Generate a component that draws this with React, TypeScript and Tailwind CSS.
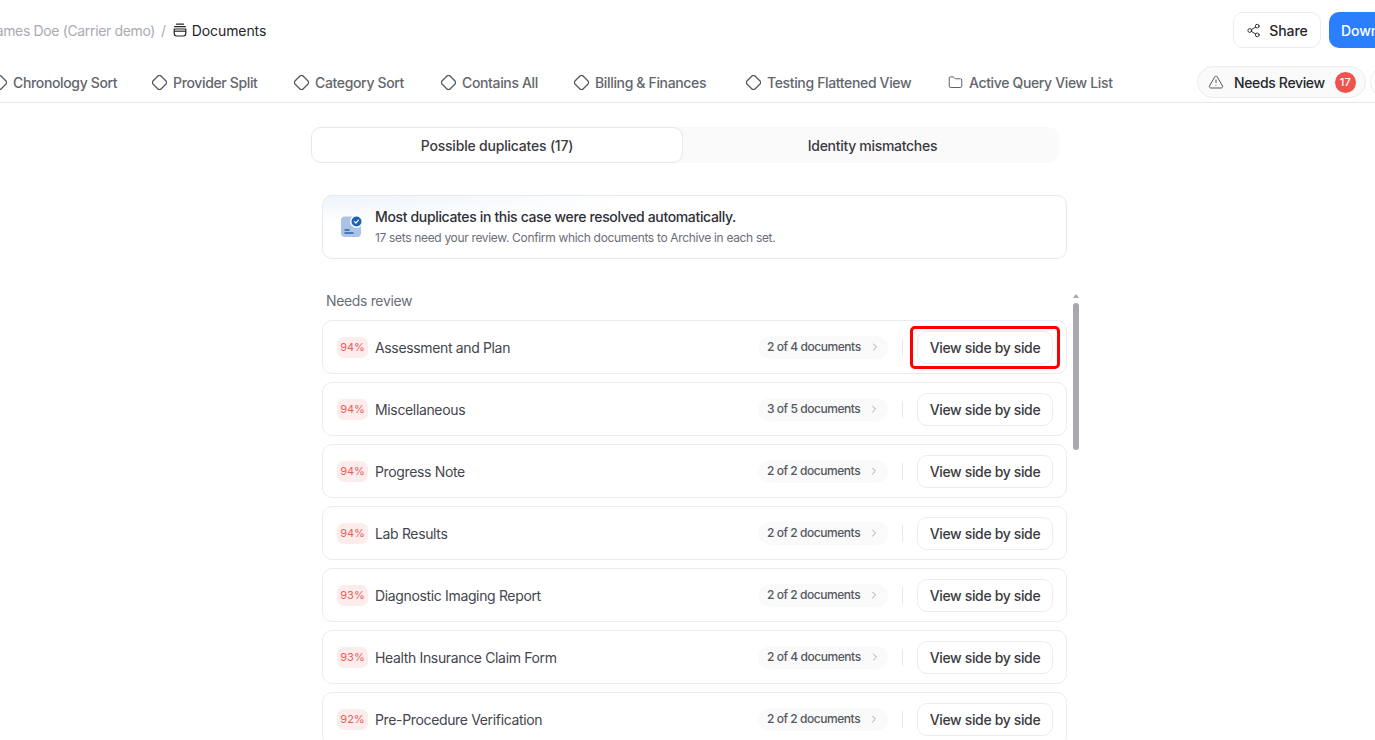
import React from 'react';
import { AlertTriangle, ChevronRight, Folder, Share2 } from 'lucide-react';

const views = [
  { label: 'Chronology Sort', w: 'w-[160px]' },
  { label: 'Provider Split', w: 'w-[142px]' },
  { label: 'Category Sort', w: 'w-[147px]' },
  { label: 'Contains All', w: 'w-[133px]' },
  { label: 'Billing & Finances', w: 'w-[172px]' },
  { label: 'Testing Flattened View', w: 'w-[202px]' },
];

const rows = [
  { pct: '94%', title: 'Assessment and Plan', docs: '2 of 4 documents' },
  { pct: '94%', title: 'Miscellaneous', docs: '3 of 5 documents' },
  { pct: '94%', title: 'Progress Note', docs: '2 of 2 documents' },
  { pct: '94%', title: 'Lab Results', docs: '2 of 2 documents' },
  { pct: '93%', title: 'Diagnostic Imaging Report', docs: '2 of 2 documents' },
  { pct: '93%', title: 'Health Insurance Claim Form', docs: '2 of 4 documents' },
  { pct: '92%', title: 'Pre-Procedure Verification', docs: '2 of 2 documents' },
];

const Diamond = () => (
  <svg width="15" height="15" viewBox="0 0 15 15" fill="none" stroke="#55585f" strokeWidth="1.3" className="shrink-0">
    <rect x="1.8" y="1.8" width="11.4" height="11.4" rx="2.5" transform="rotate(45 7.5 7.5)" />
  </svg>
);

const DocStack = () => (
  <svg width="14" height="14" viewBox="0 0 14 14" fill="none" stroke="#26272b" strokeWidth="1.2" className="shrink-0">
    <path d="M3.5 1.2h7" strokeLinecap="round" />
    <path d="M1.6 3.6h10.8" strokeLinecap="round" />
    <path d="M1.2 6h11.6v4.6a2.4 2.4 0 0 1-2.4 2.4H3.6a2.4 2.4 0 0 1-2.4-2.4z" />
    <path d="M1.2 8.2h11.6" />
  </svg>
);

const ResolvedIcon = () => (
  <svg width="24" height="24" viewBox="0 0 24 24" fill="none" className="shrink-0">
    <rect x="1" y="1.5" width="20" height="20.5" rx="4" fill="#a9c4e6" />
    <path d="M5 15h4M5 18h8" stroke="#2c63a8" strokeWidth="1.5" strokeLinecap="round" />
    <circle cx="16.5" cy="6.5" r="6.5" fill="#fff" />
    <circle cx="16.5" cy="6.5" r="5" fill="#1f62b5" />
    <path d="M14.4 6.6l1.5 1.4 2.6-2.8" stroke="#fff" strokeWidth="1.2" strokeLinecap="round" strokeLinejoin="round" />
  </svg>
);

const App: React.FC = () => {
  return (
    <div className="relative h-screen overflow-hidden bg-white font-['Inter',sans-serif]">
      <div className="flex h-[60px] items-center justify-between">
        <div className="flex items-center -ml-[12px] text-[14px] tracking-[-0.35px]">
          <span className="text-[#a9abb2]">James Doe (Carrier demo)</span>
          <span className="ml-[6px] mr-[7px] text-[#a9abb2]">/</span>
          <DocStack />
          <span className="ml-[5px] tracking-[-0.1px] text-[#26272b]">Documents</span>
        </div>
        <div className="flex items-center gap-2 -mr-[46px]">
          <button className="flex h-9 w-[88px] items-center justify-center gap-2 rounded-[10px] border border-[#ececee] bg-white text-[14px] font-medium tracking-[-0.1px] text-[#26272b]">
            <Share2 size={15} strokeWidth={1.5} />
            Share
          </button>
          <button className="h-9 w-[92px] rounded-[10px] bg-[#2b7fff] pl-3 text-left text-[14px] font-medium tracking-[-0.1px] text-white">Download</button>
        </div>
      </div>

      {/* View tabs */}
      <div className="flex h-[43px] items-center overflow-hidden border-b border-[#e8e8ea] pt-[2px]">
        <div className="flex items-center -ml-[8px] text-[14px] font-medium tracking-[-0.35px]">
          {views.map((v) => (
            <div key={v.label} className={`flex items-center gap-[6px] text-[#63666d] ${v.w} shrink-0`}>
              <Diamond />
              <span className="whitespace-nowrap">{v.label}</span>
            </div>
          ))}
          <div className="flex w-[249px] shrink-0 items-center gap-[6px] text-[#63666d]">
            <Folder size={15} strokeWidth={1.5} color="#55585f" />
            <span className="whitespace-nowrap">Active Query View List</span>
          </div>
          <div className="flex h-8 w-[169px] shrink-0 items-center rounded-full border border-[#ececee] bg-[#fafafa] pl-[10px]">
            <AlertTriangle size={16} strokeWidth={1.5} color="#55585f" />
            <span className="ml-[10px] text-[#26272b]">Needs Review</span>
            <span className="ml-[10px] flex h-[21px] w-[21px] items-center justify-center rounded-full bg-[#ef5350] text-[11px] font-medium tracking-normal text-white">17</span>
          </div>
          <div className="ml-[4px] h-8 w-8 shrink-0 rounded-full border border-[#ececee] bg-white" />
        </div>
      </div>

      {/* Tabs */}
      <div className="ml-[311px] mt-6 flex h-9 w-[748px] rounded-[10px] bg-[#fafafa] text-[14px] font-medium text-[#3a3b40]">
        <div className="flex w-[372px] items-center justify-center rounded-[10px] border border-[#e8e8ea] bg-white tracking-[-0.2px]">
          Possible duplicates (17)
        </div>
        <div className="flex flex-1 items-center justify-center pl-[3px] tracking-[-0.3px]">Identity mismatches</div>
      </div>

      <div className="ml-[322px] w-[745px]">
        {/* Banner */}
        <div className="mt-8 flex h-[64px] items-center gap-[11px] rounded-[10px] border border-[#e8e8ea] bg-[radial-gradient(ellipse_at_top_left,#edf4fc_0%,#ffffff_30%)] pl-[17px]">
          <ResolvedIcon />
          <div>
            <div className="text-[14px] font-medium leading-[21px] tracking-[-0.35px] text-[#2f3036]">Most duplicates in this case were resolved automatically.</div>
            <div className="text-[12px] leading-[21px] tracking-[-0.33px] text-[#6b6e76]">17 sets need your review. Confirm which documents to Archive in each set.</div>
          </div>
        </div>

        <div className="mt-[34px] pl-1 text-[14px] leading-[16px] tracking-[-0.35px] text-[#6b6e76]">Needs review</div>

        {/* Rows */}
        <div className="mt-[11px] flex flex-col gap-[8px]">
          {rows.map((r, i) => (
            <div key={r.title} className="flex h-[54px] shrink-0 items-center rounded-[10px] border border-[#ececee] bg-white pl-[14px] pr-[13px]">
              <span className="flex h-[21px] w-[31px] items-center justify-center rounded-[7px] bg-[#fdecec] text-[11px] text-[#e5605c]">{r.pct}</span>
              <span className="ml-[7px] text-[14px] tracking-[-0.35px] text-[#44464d]">{r.title}</span>
              <span className="ml-auto flex h-[23px] w-[130px] items-center rounded-full bg-[#fafafa] pl-[9px] text-[12px] font-medium tracking-[-0.45px] text-[#55585f]">
                {r.docs}
                <ChevronRight size={12} strokeWidth={1.5} color="#8b8d94" className="ml-[8px]" />
              </span>
              <span className="mx-[14px] h-[17px] w-px bg-[#e8e8ea]" />
              <div className="relative">
                <button className="h-[33px] w-[136px] rounded-[10px] border border-[#ececee] bg-white text-[14px] font-medium tracking-[-0.35px] text-[#3a3b40]">View side by side</button>
                {i === 0 && <div className="absolute -left-[7px] -top-[5px] h-[43px] w-[150px] rounded-[5px] border-[3px] border-[#f00]" />}
              </div>
            </div>
          ))}
        </div>
      </div>

      {/* Overlay scrollbar */}
      <div className="absolute left-[1073px] top-[294px] h-0 w-0 border-x-[3px] border-b-[4px] border-x-transparent border-b-[#a8a8ad]" />
      <div className="absolute left-[1073px] top-[303px] h-[147px] w-[6px] rounded-full bg-[#a8a8ad]" />
    </div>
  );
};

export default App;
